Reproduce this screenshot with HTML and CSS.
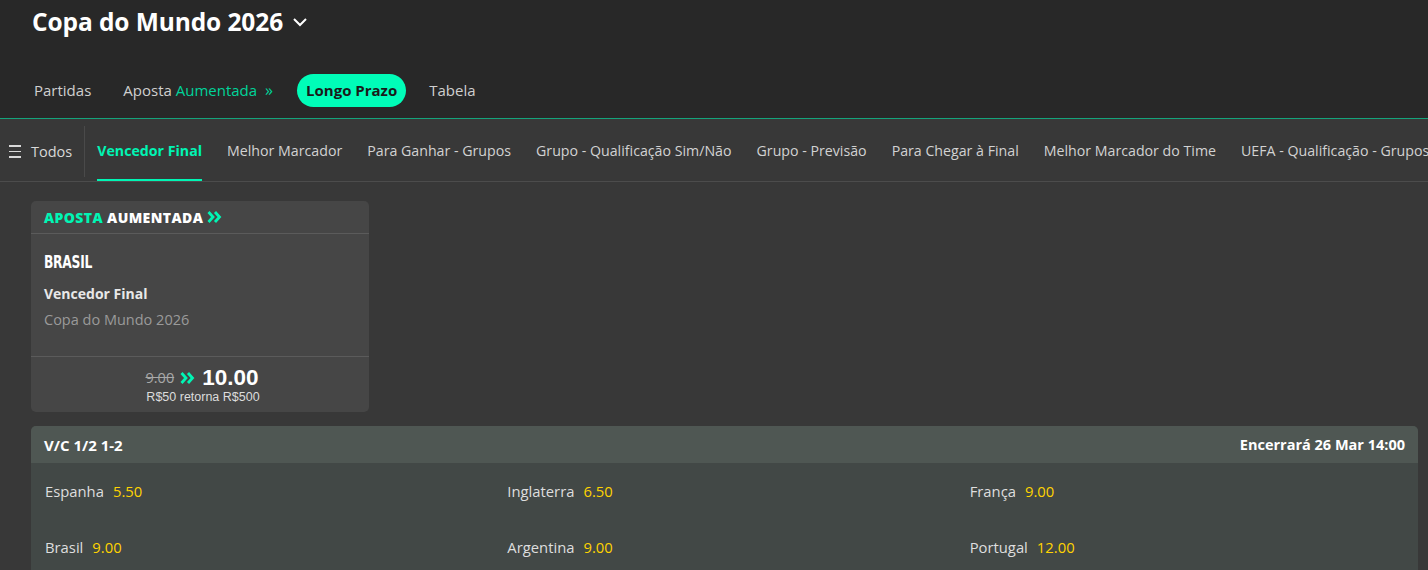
FILE: index.html
```html
<!DOCTYPE html>
<html lang="pt-BR">
<head>
<meta charset="utf-8">
<title>Copa do Mundo 2026</title>
<link rel="stylesheet" href="styles.css">
</head>
<body>
<header class="top">
  <div class="title-row">
    <h1 class="title">Copa do Mundo 2026</h1>
    <svg class="chevron" width="16" height="10" viewBox="0 0 16 10"><path d="M2 2 L8 8 L14 2" fill="none" stroke="#fff" stroke-width="2"/></svg>
  </div>
  <nav class="tabs">
    <a class="tab">Partidas</a>
    <a class="tab">Aposta <span class="green">Aumentada</span><span class="green dbl">»</span></a>
    <a class="tab pill">Longo Prazo</a>
    <a class="tab">Tabela</a>
  </nav>
</header>
<nav class="subnav">
  <div class="all"><span class="burger"><i></i><i></i><i></i></span>Todos</div>
  <div class="sub-items">
    <a class="sub active">Vencedor Final</a>
    <a class="sub">Melhor Marcador</a>
    <a class="sub">Para Ganhar - Grupos</a>
    <a class="sub">Grupo - Qualificação Sim/Não</a>
    <a class="sub">Grupo - Previsão</a>
    <a class="sub">Para Chegar à Final</a>
    <a class="sub">Melhor Marcador do Time</a>
    <a class="sub">UEFA - Qualificação - Grupos</a>
  </div>
</nav>
<main class="main">
  <section class="boost">
    <div class="boost-head"><span class="green">APOSTA</span> AUMENTADA <svg class="dchev" width="15" height="12" viewBox="0 0 15 12"><path d="M1.5 1 L6 6 L1.5 11 M8 1 L12.5 6 L8 11" fill="none" stroke="#00f5b4" stroke-width="2.8"/></svg></div>
    <div class="boost-body">
      <div class="team">BRASIL</div>
      <div class="market">Vencedor Final</div>
      <div class="event">Copa do Mundo 2026</div>
    </div>
    <div class="boost-foot">
      <div class="prices"><span class="old">9.00</span><svg class="dchev" width="15" height="12" viewBox="0 0 15 12"><path d="M1.5 1 L6 6 L1.5 11 M8 1 L12.5 6 L8 11" fill="none" stroke="#00f5b4" stroke-width="2.8"/></svg><span class="new">10.00</span></div>
      <div class="returns">R$50 retorna R$500</div>
    </div>
  </section>
  <section class="panel">
    <div class="panel-head"><span>V/C 1/2 1-2</span><span class="close">Encerrará 26 Mar 14:00</span></div>
    <div class="grid">
      <div class="cell"><span class="name">Espanha</span><span class="odd">5.50</span></div>
      <div class="cell"><span class="name">Inglaterra</span><span class="odd">6.50</span></div>
      <div class="cell"><span class="name">França</span><span class="odd">9.00</span></div>
      <div class="cell"><span class="name">Brasil</span><span class="odd">9.00</span></div>
      <div class="cell"><span class="name">Argentina</span><span class="odd">9.00</span></div>
      <div class="cell"><span class="name">Portugal</span><span class="odd">12.00</span></div>
    </div>
  </section>
</main>
</body>
</html>
```
FILE: styles.css
```css
* { box-sizing: border-box; }
html, body { margin: 0; padding: 0; }
body {
  background: #383838;
  font-family: "Open Sans", "Noto Sans", sans-serif;
  color: #e6e6e6;
  overflow: hidden;
}
a { text-decoration: none; color: inherit; }
.green { color: #00d49a; }

.top {
  background: #282828;
  height: 119px;
  border-bottom: 1px solid #14a37b;
  padding-left: 32px;
}
.title-row {
  display: flex;
  align-items: center;
  height: 42px;
  gap: 9px;
}
.title {
  margin: 0;
  font-size: 24.5px;
  font-weight: 700;
  color: #fff;
  letter-spacing: -0.1px;
}
.chevron { margin-top: 1px; }
.tabs {
  display: flex;
  align-items: center;
  height: 34px;
  margin-top: 31px;
  margin-left: 2px;
  gap: 22px;
}
.tab {
  font-size: 15px;
  color: #cfcfcf;
  line-height: 21px;
}
.tab:first-child { margin-right: 10px; }
.tab .dbl { font-size: 16px; margin-left: 8px; }
.pill {
  background: #00fdb8;
  color: #1a1a1a;
  font-weight: 700;
  border-radius: 17px;
  padding: 0 9px;
  height: 33px;
  display: flex;
  align-items: center;
  margin-left: 2px;
  margin-right: 1px;
}

.subnav {
  display: flex;
  height: 63px;
  border-bottom: 1px solid #4c4c4c;
  white-space: nowrap;
  overflow: hidden;
}
.all {
  display: flex;
  align-items: center;
  gap: 10px;
  padding: 0 12px 0 9px;
  font-size: 14.5px;
  color: #d9d9d9;
  border-right: 1px solid #4a4a4a;
  margin: 7px 0 4px;
  flex: none;
}
.burger { display: flex; flex-direction: column; gap: 4px; width: 12px; }
.burger i { display: block; height: 1.5px; background: #d9d9d9; }
.sub-items {
  display: flex;
  padding-left: 12px;
  gap: 25px;
}
.sub {
  display: flex;
  align-items: center;
  font-size: 14.2px;
  color: #d2d2d2;
  border-bottom: 2px solid transparent;
  padding-top: 3px;
}
.sub.active {
  color: #00f5b4;
  font-weight: 700;
  border-bottom-color: #00f5b4;
}

.main {
  padding: 19px 10px 0 31px;
}
.boost {
  width: 338px;
  height: 211px;
  background: #464646;
  border-radius: 5px;
  display: flex;
  flex-direction: column;
}
.boost-head {
  height: 33px;
  display: flex;
  align-items: center;
  padding-left: 13px;
  font-size: 14px;
  font-weight: 800;
  letter-spacing: 0.4px;
  color: #fff;
  border-bottom: 1px solid #5b5b5b;
  gap: 4px;
}
.boost-head .green { color: #00f5b4; }
.dchev { display: block; }
.boost-body {
  padding: 17px 13px 0;
  height: 123px;
  border-bottom: 1px solid #5b5b5b;
}
.team {
  font-family: "DejaVu Sans Condensed", "DejaVu Sans", sans-serif;
  font-stretch: condensed;
  font-weight: 700;
  font-size: 17.5px;
  line-height: 22px;
  color: #fff;
  transform: scaleX(0.78);
  transform-origin: left;
  letter-spacing: -0.3px;
}
.market {
  margin-top: 11px;
  font-size: 14px;
  font-weight: 700;
  color: #e8e8e8;
}
.event {
  margin-top: 7px;
  font-size: 14.5px;
  color: #9a9a9a;
}
.boost-foot {
  flex: 1;
  display: flex;
  flex-direction: column;
  align-items: center;
  padding-top: 9px;
}
.prices {
  display: flex;
  align-items: center;
  gap: 6px;
  height: 24px;
  margin-left: 4px;
}
.old {
  font-size: 14.5px;
  line-height: 20px;
  color: #a8a8a8;
  text-decoration: line-through;
}
.new {
  font-family: "Liberation Sans", Arial, sans-serif;
  font-size: 22.5px;
  line-height: 24px;
  font-weight: 700;
  color: #fff;
  margin-left: 1px;
}
.returns {
  font-family: "Liberation Sans", Arial, sans-serif;
  font-size: 12.5px;
  line-height: 15px;
  color: #dcdcdc;
  margin-top: 0;
  margin-left: 6px;
}

.panel {
  margin-top: 14px;
  border-radius: 5px 5px 0 0;
  overflow: hidden;
  background: #424846;
}
.panel-head {
  height: 37px;
  background: #4f5753;
  display: flex;
  align-items: center;
  justify-content: space-between;
  padding: 0 13px;
  font-size: 15px;
  font-weight: 700;
  color: #fff;
}
.panel-head .close { font-size: 14.5px; }
.grid {
  display: grid;
  grid-template-columns: repeat(3, 1fr);
}
.cell {
  height: 56px;
  display: flex;
  align-items: center;
  padding-left: 14px;
  gap: 9px;
  font-size: 14.8px;
}
.name { color: #dedede; }
.odd { color: #ffd400; }
```
